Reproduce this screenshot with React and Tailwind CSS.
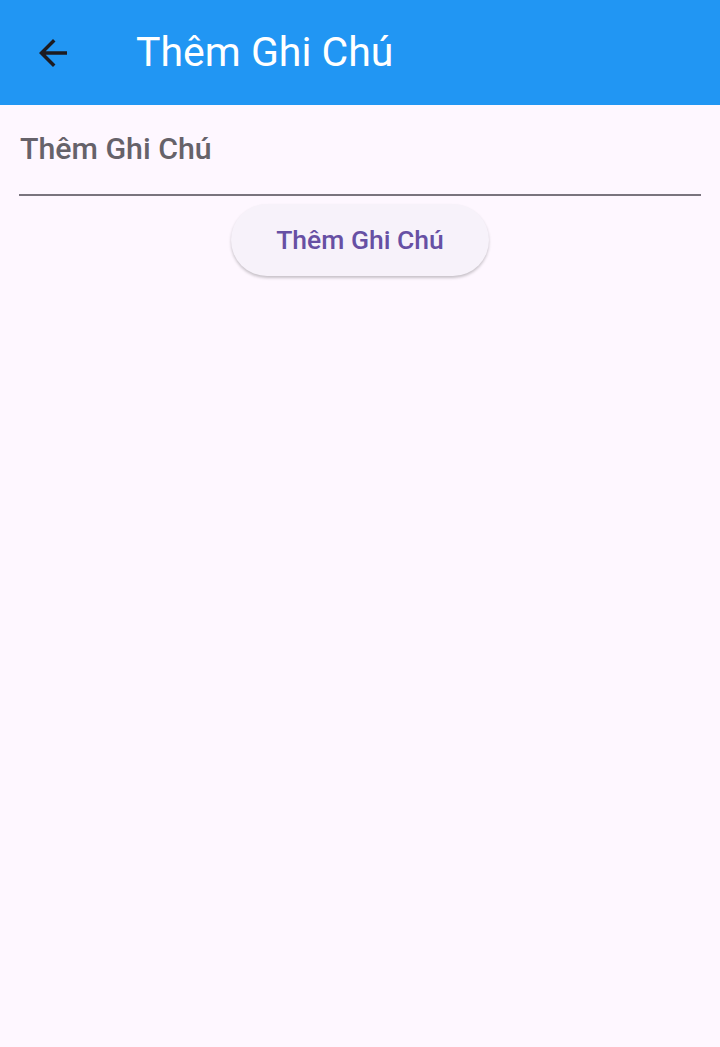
export default function App() {
    return (
        <div className="min-h-[1047px] bg-[#fef7ff] font-['Roboto',sans-serif]">
            {/* App bar */}
            <header className="h-[105px] bg-[#2196f3] flex items-center">
                <button className="w-[70px] h-[70px] ml-[18px] flex items-center justify-center text-[#1d1b20]">
                    <svg width="42" height="42" viewBox="0 0 24 24" fill="currentColor">
                        <path d="M20 11H7.83l5.59-5.59L12 4l-8 8 8 8 1.41-1.41L7.83 13H20v-2z" />
                    </svg>
                </button>
                <h1 className="ml-[48px] text-[41px] leading-none text-white">Thêm Ghi Chú</h1>
            </header>

            {/* Form */}
            <div className="px-[19px] pt-[27px] flex flex-col items-center">
                <div className="w-full border-b-[2px] border-[#79747e] pb-[28px]">
                    <span className="block pl-px text-[30.3px] leading-[34px] font-medium text-[#66626a]">Thêm Ghi Chú</span>
                </div>
                <button className="mt-[8px] h-[72px] w-[258px] rounded-full bg-[#f7f2fa] text-[26.5px] font-medium text-[#6750a4] shadow-[0_2px_3px_rgba(0,0,0,0.22)]">
                    Thêm Ghi Chú
                </button>
            </div>
        </div>
    );
}
